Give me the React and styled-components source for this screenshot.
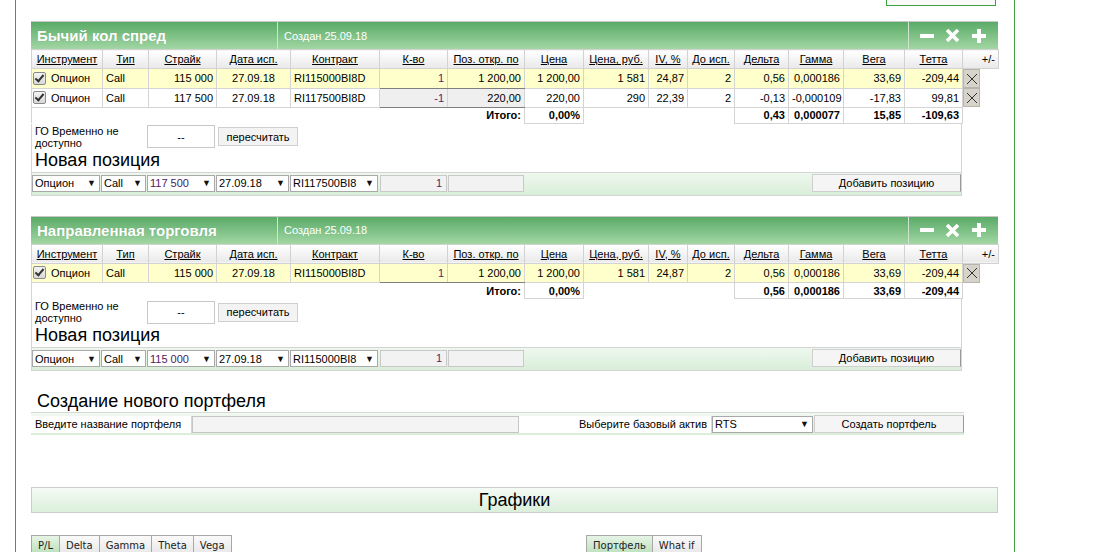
import React from "react";
import styled, { createGlobalStyle } from "styled-components";

const GlobalStyle = createGlobalStyle`
  html, body {
    margin: 0;
    padding: 0;
    background: #fff;
    font-family: "Liberation Sans", Arial, sans-serif;
    font-size: 11px;
    color: #000;
  }
`;

const cols = [71, 46, 68, 74, 89, 68, 77, 59, 65, 39, 47, 54, 55, 61, 58, 36];

const headers = [
  "Инструмент", "Тип", "Страйк", "Дата исп.", "Контракт", "К-во", "Поз. откр. по",
  "Цена", "Цена, руб.", "IV, %", "До исп.", "Дельта", "Гамма", "Вега", "Тетта"
];

const portfolios = [
  {
    title: "Бычий кол спред",
    created: "Создан 25.09.18",
    rows: [
      { type: "Call", strike: "115 000", date: "27.09.18", contract: "RI115000BI8D", qty: "1", open: "1 200,00", price: "1 200,00", rub: "1 581", iv: "24,87", days: "2", delta: "0,56", gamma: "0,000186", vega: "33,69", theta: "-209,44", hl: true },
      { type: "Call", strike: "117 500", date: "27.09.18", contract: "RI117500BI8D", qty: "-1", open: "220,00", price: "220,00", rub: "290", iv: "22,39", days: "2", delta: "-0,13", gamma: "-0,000109", vega: "-17,83", theta: "99,81" }
    ],
    total: { pct: "0,00%", delta: "0,43", gamma: "0,000077", vega: "15,85", theta: "-109,63" },
    next: ["117 500", "27.09.18", "RI117500BI8"]
  },
  {
    title: "Направленная торговля",
    created: "Создан 25.09.18",
    rows: [
      { type: "Call", strike: "115 000", date: "27.09.18", contract: "RI115000BI8D", qty: "1", open: "1 200,00", price: "1 200,00", rub: "1 581", iv: "24,87", days: "2", delta: "0,56", gamma: "0,000186", vega: "33,69", theta: "-209,44", hl: true }
    ],
    total: { pct: "0,00%", delta: "0,56", gamma: "0,000186", vega: "33,69", theta: "-209,44" },
    next: ["115 000", "27.09.18", "RI115000BI8"]
  }
];

function App() {
  return (
    <>
      <GlobalStyle />
      <Frame>
        <TopBar>
          <TopBox />
        </TopBar>
        {portfolios.map(p => (
          <Portfolio key={p.title} data={p} />
        ))}
        <SectionTitle>Создание нового портфеля</SectionTitle>
        <CreateRow>
          <CreateLabel>Введите название портфеля</CreateLabel>
          <CreateInput />
          <CreateLabel $right $w={193}>Выберите базовый актив</CreateLabel>
          <Select $w={101}>RTS</Select>
          <CreateButton>Создать портфель</CreateButton>
        </CreateRow>
        <ChartsBar>Графики</ChartsBar>
        <TabsLine>
          <TabGroup $w={529}>
            {["P/L", "Delta", "Gamma", "Theta", "Vega"].map((t, i) => (
              <Tab key={t} $active={i === 0}>{t}</Tab>
            ))}
          </TabGroup>
          <TabGroup $w={344}>
            <Tab $active>Портфель</Tab>
            <Tab>What if</Tab>
          </TabGroup>
        </TabsLine>
      </Frame>
    </>
  );
}

function Portfolio({ data }) {
  return (
    <Panel>
      <Header>
        <Title>{data.title}</Title>
        <Created>{data.created}</Created>
        <Tools>
          <svg width="14" height="14" viewBox="0 0 14 14"><rect x="0" y="5" width="14" height="4" fill="#fff" /></svg>
          <svg width="15" height="15" viewBox="0 0 15 15"><path d="M2 2 L13 13 M13 2 L2 13" stroke="#fff" strokeWidth="3.6" /></svg>
          <svg width="14" height="14" viewBox="0 0 14 14"><path d="M5 0h4v5h5v4H9v5H5V9H0V5h5z" fill="#fff" /></svg>
        </Tools>
      </Header>
      <Table>
        <colgroup>
          {cols.map((w, i) => <col key={i} style={{ width: w }} />)}
        </colgroup>
        <thead>
          <tr>
            {headers.map(h => (
              <Th key={h}><u>{h}</u></Th>
            ))}
            <Th $right>+/-</Th>
          </tr>
        </thead>
        <tbody>
          {data.rows.map((r, i) => (
            <Row key={i} $hl={r.hl}>
              <Td>
                <Instrument><Check /> Опцион</Instrument>
              </Td>
              <Td>{r.type}</Td>
              <Td $right>{r.strike}</Td>
              <Td $center>{r.date}</Td>
              <Td>{r.contract}</Td>
              <InputTd $hl={r.hl} $purple>{r.qty}</InputTd>
              <InputTd $hl={r.hl}>{r.open}</InputTd>
              <Td $right>{r.price}</Td>
              <Td $right>{r.rub}</Td>
              <Td $right>{r.iv}</Td>
              <Td $right>{r.days}</Td>
              <Td $right>{r.delta}</Td>
              <Td $right>{r.gamma}</Td>
              <Td $right>{r.vega}</Td>
              <Td $right>{r.theta}</Td>
              <RemoveTd>
                <RemoveButton>
                  <svg width="12" height="12" viewBox="0 0 12 12"><path d="M1 1 L11 11 M11 1 L1 11" stroke="#333" strokeWidth="1" /></svg>
                </RemoveButton>
              </RemoveTd>
            </Row>
          ))}
          <TotalRow>
            <TotalTd $first />
            <TotalTd /><TotalTd /><TotalTd /><TotalTd /><TotalTd />
            <TotalTd $right>Итого:</TotalTd>
            <TotalTd $boxed $right>{data.total.pct}</TotalTd>
            <TotalTd /><TotalTd /><TotalTd />
            <TotalTd $boxed $right>{data.total.delta}</TotalTd>
            <TotalTd $boxed $right>{data.total.gamma}</TotalTd>
            <TotalTd $boxed $right>{data.total.vega}</TotalTd>
            <TotalTd $boxed $right>{data.total.theta}</TotalTd>
            <TotalTd />
          </TotalRow>
        </tbody>
      </Table>
      <Body>
        <GoRow>
          <GoLabel>ГО Временно не доступно</GoLabel>
          <GoValue>--</GoValue>
          <PlainButton>пересчитать</PlainButton>
        </GoRow>
        <NewTitle>Новая позиция</NewTitle>
        <NewRow>
          <Select $w={68}>Опцион</Select>
          <Select $w={45}>Call</Select>
          <Select $w={68} $purple>{data.next[0]}</Select>
          <Select $w={73}>{data.next[1]}</Select>
          <Select $w={88}>{data.next[2]}</Select>
          <GrayInput $w={67} $gap={2} $purple>1</GrayInput>
          <GrayInput $w={76} />
          <Spacer />
          <AddButton>Добавить позицию</AddButton>
        </NewRow>
      </Body>
    </Panel>
  );
}

export default App;

const Frame = styled.div`
  margin-left: 15px;
  width: 983px;
  height: 552px;
  padding-left: 15px;
  border-left: 1px solid #3f9f3f;
  border-right: 1px solid #3f9f3f;
  overflow: hidden;
`;

const TopBar = styled.div`
  display: flex;
  justify-content: flex-end;
  padding-right: 18px;
  height: 6px;
`;

const TopBox = styled.div`
  width: 108px;
  height: 5px;
  border: 1px solid #3f9f3f;
  border-top: none;
  background: #f8fbf8;
`;

const Panel = styled.div`
  width: 967px;
  margin-top: 15px;
  & + & {
    margin-top: 20px;
  }
`;

const Header = styled.div`
  display: flex;
  height: 27px;
  border-top: 1px solid #c8c8c8;
  background: linear-gradient(#5aab67, #a2d6a4);
  color: #fff;
`;

const Title = styled.div`
  width: 240px;
  padding-left: 6px;
  display: flex;
  align-items: center;
  font-size: 15px;
  font-weight: bold;
  border-right: 1px solid #cde6cd;
  text-shadow: 0 0 1px rgba(0, 0, 0, 0.15);
`;

const Created = styled.div`
  flex: 1;
  padding-left: 6px;
  display: flex;
  align-items: center;
  font-size: 11px;
  border-right: 1px solid #cde6cd;
`;

const Tools = styled.div`
  width: 89px;
  display: flex;
  align-items: center;
  justify-content: space-around;
  padding: 0 6px 0 5px;
  box-sizing: border-box;
`;

const Table = styled.table`
  table-layout: fixed;
  border-collapse: collapse;
  width: 967px;
  font-size: 11px;
`;

const Th = styled.th`
  height: 18px;
  padding: 0 3px;
  font-weight: normal;
  text-align: ${p => (p.$right ? "right" : "center")};
  background: linear-gradient(#ffffff, #e9e9e9);
  border: 1px solid #d2d2d2;
  white-space: nowrap;
  overflow: hidden;
`;

const Row = styled.tr`
  background: ${p => (p.$hl ? "#ffffcc" : "#ffffff")};
`;

const Td = styled.td`
  height: 17px;
  padding: 0 3px;
  border: 1px solid #d4d4d4;
  text-align: ${p => (p.$right ? "right" : p.$center ? "center" : "left")};
  white-space: nowrap;
  overflow: hidden;
`;

const InputTd = styled.td`
  height: 17px;
  padding: 0 3px;
  text-align: right;
  border-top: 1px solid ${p => (p.$hl ? "#d4d4d4" : "#7f7f7f")};
  border-left: 1px solid #7f7f7f;
  border-bottom: 1px solid #7f7f7f;
  border-right: 1px solid #d4d4d4;
  background: ${p => (p.$hl ? "#ffffcc" : "#efefef")};
  color: ${p => (p.$purple ? "#5b2270" : "#000")};
`;

const RemoveTd = styled.td`
  padding: 0;
  background: #fff;
  border: none;
  vertical-align: middle;
`;

const RemoveButton = styled.div`
  width: 15px;
  height: 17px;
  background: #d6d3cb;
  border: 1px solid #b8b5ae;
  display: flex;
  align-items: center;
  justify-content: center;
`;

const Instrument = styled.span`
  display: flex;
  align-items: center;
  gap: 5px;
  margin-left: -2px;
`;

const Check = styled.span`
  width: 11px;
  height: 11px;
  border: 1px solid #8a8a8a;
  border-radius: 2px;
  background: linear-gradient(#f4f4f4, #d8d8d8);
  position: relative;
  &::after {
    content: "";
    position: absolute;
    left: 3px;
    top: 0px;
    width: 3px;
    height: 7px;
    border: solid #333;
    border-width: 0 2px 2px 0;
    transform: rotate(40deg);
  }
`;

const TotalRow = styled.tr`
  background: #fff;
`;

const TotalTd = styled.td`
  height: 15px;
  padding: 0 3px;
  font-weight: bold;
  text-align: ${p => (p.$right ? "right" : "left")};
  border: ${p => (p.$boxed ? "1px solid #d4d4d4" : "none")};
  border-left: ${p => (p.$first || p.$boxed ? "1px solid #d4d4d4" : "none")};
  white-space: nowrap;
`;

const Body = styled.div`
  width: 929px;
  border: 1px solid #d4d4d4;
  border-top: none;
`;

const GoRow = styled.div`
  display: flex;
  align-items: center;
  height: 25px;
  padding: 1px 0 0 3px;
  box-sizing: border-box;
`;

const GoLabel = styled.div`
  width: 112px;
  font-size: 11px;
  line-height: 12px;
`;

const GoValue = styled.div`
  width: 66px;
  height: 21px;
  border: 1px solid #c8c8c8;
  display: flex;
  align-items: center;
  justify-content: center;
`;

const PlainButton = styled.div`
  margin-left: 3px;
  width: 78px;
  height: 17px;
  border: 1px solid #d0d0d0;
  background: #f3f3f3;
  display: flex;
  align-items: center;
  justify-content: center;
`;

const NewTitle = styled.div`
  font-size: 18px;
  line-height: 20px;
  padding: 1px 0 0 3px;
  height: 23px;
  box-sizing: border-box;
`;

const NewRow = styled.div`
  display: flex;
  align-items: flex-start;
  gap: 1px;
  height: 23px;
  padding-top: 2px;
  box-sizing: border-box;
  border-top: 1px solid #d4d4d4;
  background: linear-gradient(#eef8ee, #d9eed9);
`;

const Select = styled.div`
  width: ${p => p.$w}px;
  height: 17px;
  box-sizing: border-box;
  border: 1px solid #a9a9a9;
  background: #fff;
  color: ${p => (p.$purple ? "#4b1b60" : "#000")};
  display: flex;
  align-items: center;
  justify-content: space-between;
  padding: 0 3px 0 2px;
  font-size: 11px;
  &::after {
    content: "▼";
    font-size: 9px;
    color: #111;
  }
`;

const GrayInput = styled.div`
  width: ${p => p.$w}px;
  margin-left: ${p => (p.$gap ? p.$gap - 1 : 0)}px;
  height: 17px;
  box-sizing: border-box;
  border: 1px solid #c9c9c9;
  background: #f2f2f2;
  text-align: right;
  padding: 1px 4px;
  color: ${p => (p.$purple ? "#5b2270" : "#000")};
`;

const Spacer = styled.div`
  flex: 1;
`;

const AddButton = styled.div`
  width: 149px;
  height: 18px;
  margin-top: -1px;
  box-sizing: border-box;
  border: 1px solid #cfcfcf;
  border-right-color: #9a9a9a;
  background: #f5f5f5;
  display: flex;
  align-items: center;
  justify-content: center;
`;

const SectionTitle = styled.div`
  margin-top: 19px;
  padding-left: 6px;
  font-size: 18px;
  line-height: 22px;
`;

const CreateRow = styled.div`
  display: flex;
  align-items: center;
  width: 933px;
  height: 23px;
  box-sizing: border-box;
  padding: 3px 0;
  border-top: 1px solid #d4dcd4;
  background: linear-gradient(#f2f7f2, #d9eed9);
`;

const CreateLabel = styled.div`
  width: ${p => p.$w || 161}px;
  flex: none;
  height: 17px;
  box-sizing: border-box;
  background: #fff;
  padding: 0 4px;
  display: flex;
  align-items: center;
  justify-content: ${p => (p.$right ? "flex-end" : "flex-start")};
  border-right: 1px solid #d4d4d4;
`;

const CreateInput = styled.div`
  width: 327px;
  flex: none;
  height: 17px;
  box-sizing: border-box;
  border: 1px solid #c6c6c6;
  background: #f4f4f4;
`;

const CreateButton = styled.div`
  width: 150px;
  margin-left: 1px;
  height: 18px;
  box-sizing: border-box;
  border: 1px solid #cfcfcf;
  border-right-color: #9a9a9a;
  background: #f5f5f5;
  display: flex;
  align-items: center;
  justify-content: center;
`;

const ChartsBar = styled.div`
  margin-top: 52px;
  width: 967px;
  height: 26px;
  box-sizing: border-box;
  border: 1px solid #cccccc;
  background: linear-gradient(#f4fbf4, #dbefdb);
  display: flex;
  align-items: center;
  justify-content: center;
  font-size: 18px;
`;

const TabsLine = styled.div`
  display: flex;
  gap: 26px;
  margin-top: 22px;
`;

const TabGroup = styled.div`
  width: ${p => p.$w}px;
  display: flex;
  border-bottom: 1px solid #c4c4c4;
  height: 20px;
`;

const Tab = styled.div`
  height: 19px;
  padding: 0 6px;
  display: flex;
  align-items: center;
  font-family: "DejaVu Sans", Verdana, sans-serif;
  font-size: 10px;
  color: #222;
  border: 1px solid #a8a8a8;
  border-bottom: none;
  margin-right: -1px;
  background: ${p => (p.$active ? "linear-gradient(#e6f4e6, #b9dfb9)" : "linear-gradient(#fafafa, #e6e6e6)")};
`;
